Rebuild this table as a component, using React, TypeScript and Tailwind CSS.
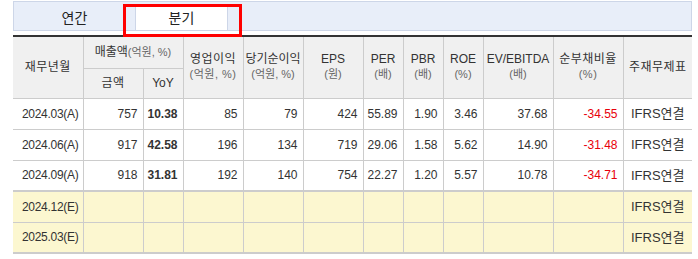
const ROWS = [
  { date: "2024.03(A)", sales: "757", yoy: "10.38", op: "85", net: "79", eps: "424", per: "55.89", pbr: "1.90", roe: "3.46", ev: "37.68", debt: "-34.55", est: false },
  { date: "2024.06(A)", sales: "917", yoy: "42.58", op: "196", net: "134", eps: "719", per: "29.06", pbr: "1.58", roe: "5.62", ev: "14.90", debt: "-31.48", est: false },
  { date: "2024.09(A)", sales: "918", yoy: "31.81", op: "192", net: "140", eps: "754", per: "22.27", pbr: "1.20", roe: "5.57", ev: "10.78", debt: "-34.71", est: false },
  { date: "2024.12(E)", sales: "", yoy: "", op: "", net: "", eps: "", per: "", pbr: "", roe: "", ev: "", debt: "", est: true },
  { date: "2025.03(E)", sales: "", yoy: "", op: "", net: "", eps: "", per: "", pbr: "", roe: "", ev: "", debt: "", est: true },
];

const WIDTHS = [70, 60, 40, 60, 60, 60, 40, 40, 40, 70, 70, 69];

const th = "border border-[#cccccc] font-normal text-[#333] leading-[15px] text-center align-middle whitespace-nowrap text-[12px]";
const td = "border border-[#cccccc] text-right pr-[5px] text-[#333]";
const sub = "text-[11px] text-[#666]";

export default function App() {
  return (
    <div className="w-[698px] h-[259px] bg-white relative pl-[13px] pt-[1px] font-['Liberation_Sans','Noto_Sans_CJK_KR',sans-serif] text-[12px]">
      {/* tabs */}
      <div className="w-[679px] h-[30px] bg-[#e8eef9] border border-[#cdd6e8] flex items-end">
        <div className="w-[121px] h-[23px] flex items-center justify-center text-[14px] text-[#222]">연간</div>
        <div className="w-[93px] h-[23px] bg-white border-l border-r border-[#cdd6e8] flex items-center justify-center text-[14px] text-[#222]">분기</div>
      </div>
      <div className="absolute left-[123px] top-[4px] w-[119px] h-[33px] border-[3px] border-[#ff0000]" />

      <table className="mt-[4px] border-collapse table-fixed w-[679px] border-t-2 border-t-[#333]">
        <colgroup>
          {WIDTHS.map((w, i) => (
            <col key={i} style={{ width: w }} />
          ))}
        </colgroup>
        <thead className="bg-[#f0f0f0]">
          <tr className="h-[32px]">
            <th rowSpan={2} className={`${th} border-t-0 border-l-0 tracking-[0.5px]`}>재무년월</th>
            <th colSpan={2} className={`${th} border-t-0`}>
              매출액<span className={sub}>(억원, %)</span>
            </th>
            <th rowSpan={2} className={`${th} border-t-0 tracking-[0.5px]`}>
              영업이익<br /><span className={sub}>(억원, %)</span>
            </th>
            <th rowSpan={2} className={`${th} border-t-0`}>
              당기순이익<br /><span className={sub}>(억원, %)</span>
            </th>
            <th rowSpan={2} className={`${th} border-t-0`}>
              EPS<br /><span className={sub}>(원)</span>
            </th>
            <th rowSpan={2} className={`${th} border-t-0`}>
              PER<br /><span className={sub}>(배)</span>
            </th>
            <th rowSpan={2} className={`${th} border-t-0`}>
              PBR<br /><span className={sub}>(배)</span>
            </th>
            <th rowSpan={2} className={`${th} border-t-0`}>
              ROE<br /><span className={sub}>(%)</span>
            </th>
            <th rowSpan={2} className={`${th} border-t-0`}>
              EV/EBITDA<br /><span className={sub}>(배)</span>
            </th>
            <th rowSpan={2} className={`${th} border-t-0 tracking-[0.5px]`}>
              순부채비율<br /><span className={sub}>(%)</span>
            </th>
            <th rowSpan={2} className={`${th} border-t-0 border-r-0 tracking-[0.5px]`}>주재무제표</th>
          </tr>
          <tr className="h-[30px]">
            <th className={`${th} tracking-[0.5px]`}>금액</th>
            <th className={th}>YoY</th>
          </tr>
        </thead>
        <tbody>
          {ROWS.map((r, i) => (
            <tr
              key={r.date}
              className={`h-[31px] ${r.est ? "bg-[#fcf7d0]" : "bg-white"} ${i === 3 ? "border-t-2 border-t-[#cccccc]" : ""} ${i === 4 ? "border-b-2 border-b-[#cccccc]" : ""}`}
            >
              <td className="border border-l-0 border-[#cccccc] pl-[9px] text-[#333] tracking-[-0.3px]">{r.date}</td>
              <td className={td}>{r.sales}</td>
              <td className={`${td} font-bold text-[#111]`}>{r.yoy}</td>
              <td className={td}>{r.op}</td>
              <td className={td}>{r.net}</td>
              <td className={td}>{r.eps}</td>
              <td className={td}>{r.per}</td>
              <td className={td}>{r.pbr}</td>
              <td className={td}>{r.roe}</td>
              <td className={td}>{r.ev}</td>
              <td className={`${td} !text-[#e8000b]`}>{r.debt}</td>
              <td className="border border-r-0 border-[#cccccc] text-center text-[#333] text-[13px]">IFRS연결</td>
            </tr>
          ))}
        </tbody>
      </table>
    </div>
  );
}
